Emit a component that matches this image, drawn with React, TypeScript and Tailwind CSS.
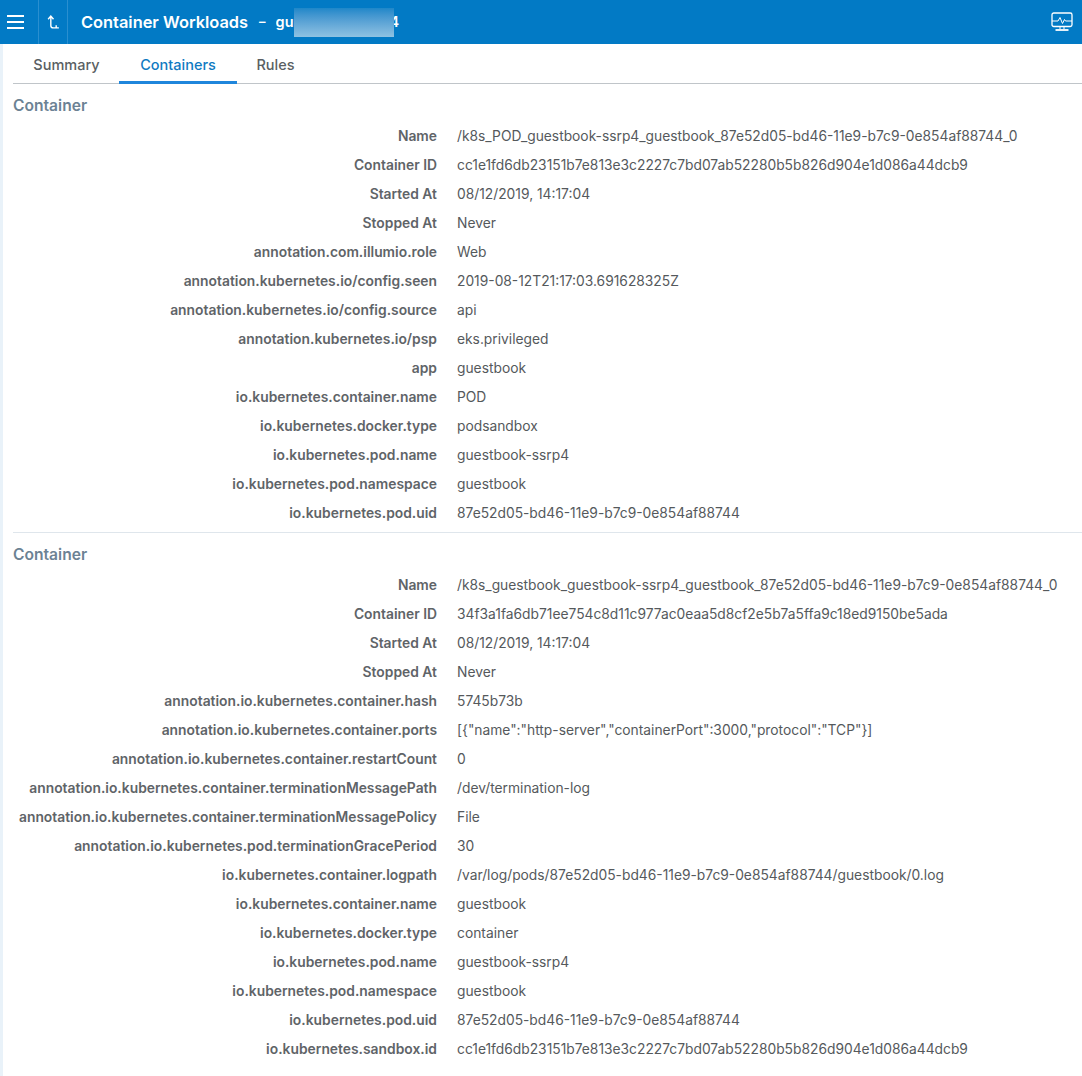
import * as React from "react";

type Row = [string, string];

const firstContainer: Row[] = [
  ["Name", "/k8s_POD_guestbook-ssrp4_guestbook_87e52d05-bd46-11e9-b7c9-0e854af88744_0"],
  ["Container ID", "cc1e1fd6db23151b7e813e3c2227c7bd07ab52280b5b826d904e1d086a44dcb9"],
  ["Started At", "08/12/2019, 14:17:04"],
  ["Stopped At", "Never"],
  ["annotation.com.illumio.role", "Web"],
  ["annotation.kubernetes.io/config.seen", "2019-08-12T21:17:03.691628325Z"],
  ["annotation.kubernetes.io/config.source", "api"],
  ["annotation.kubernetes.io/psp", "eks.privileged"],
  ["app", "guestbook"],
  ["io.kubernetes.container.name", "POD"],
  ["io.kubernetes.docker.type", "podsandbox"],
  ["io.kubernetes.pod.name", "guestbook-ssrp4"],
  ["io.kubernetes.pod.namespace", "guestbook"],
  ["io.kubernetes.pod.uid", "87e52d05-bd46-11e9-b7c9-0e854af88744"],
];

const secondContainer: Row[] = [
  ["Name", "/k8s_guestbook_guestbook-ssrp4_guestbook_87e52d05-bd46-11e9-b7c9-0e854af88744_0"],
  ["Container ID", "34f3a1fa6db71ee754c8d11c977ac0eaa5d8cf2e5b7a5ffa9c18ed9150be5ada"],
  ["Started At", "08/12/2019, 14:17:04"],
  ["Stopped At", "Never"],
  ["annotation.io.kubernetes.container.hash", "5745b73b"],
  ["annotation.io.kubernetes.container.ports", '[{"name":"http-server","containerPort":3000,"protocol":"TCP"}]'],
  ["annotation.io.kubernetes.container.restartCount", "0"],
  ["annotation.io.kubernetes.container.terminationMessagePath", "/dev/termination-log"],
  ["annotation.io.kubernetes.container.terminationMessagePolicy", "File"],
  ["annotation.io.kubernetes.pod.terminationGracePeriod", "30"],
  ["io.kubernetes.container.logpath", "/var/log/pods/87e52d05-bd46-11e9-b7c9-0e854af88744/guestbook/0.log"],
  ["io.kubernetes.container.name", "guestbook"],
  ["io.kubernetes.docker.type", "container"],
  ["io.kubernetes.pod.name", "guestbook-ssrp4"],
  ["io.kubernetes.pod.namespace", "guestbook"],
  ["io.kubernetes.pod.uid", "87e52d05-bd46-11e9-b7c9-0e854af88744"],
  ["io.kubernetes.sandbox.id", "cc1e1fd6db23151b7e813e3c2227c7bd07ab52280b5b826d904e1d086a44dcb9"],
];

const ContainerSection = ({ rows }: { rows: Row[] }) => (
  <section>
    <h2 className="h-[38px] pt-[11px] text-[15.6px] leading-[22px] font-semibold text-[#6c8294]">Container</h2>
    <div className="grid grid-cols-[424px_1fr] gap-x-[20px]">
      {rows.map(([label, value]) => (
        <React.Fragment key={label}>
          <div className="h-[29px] text-right text-[13.85px] leading-[29px] font-semibold whitespace-nowrap text-[#5f6468]">
            {label}
          </div>
          <div className="h-[29px] text-[13.8px] leading-[29px] whitespace-nowrap text-[#55595c]">{value}</div>
        </React.Fragment>
      ))}
    </div>
  </section>
);

const MonitorIcon = () => (
  <svg width="22" height="20" viewBox="0 0 22 20" fill="none" stroke="white" strokeWidth="1.3">
    <rect x="1" y="1" width="20" height="13.5" rx="1.8" />
    <path d="M1 9h6l2-3.5 2.5 6 2-4 1 1.5H21" strokeWidth="1" />
    <path d="M4.5 18h13" strokeWidth="1.8" />
    <path d="M9 15v2M13 15v2" strokeWidth="1" />
  </svg>
);

const App = () => (
  <div className="h-[1076px] w-[1082px] overflow-hidden bg-white font-['Inter',sans-serif]">
    <header className="flex h-[44px] items-center bg-[#027ac5] text-white">
      <div className="flex h-full w-[39px] items-center border-r border-[#2a8fd0] pl-[7px]">
        <div className="flex w-[17px] flex-col gap-[3.5px]">
          <span className="h-[2.5px] bg-white" />
          <span className="h-[2.5px] bg-white" />
          <span className="h-[2.5px] bg-white" />
        </div>
      </div>
      <div className="flex h-full w-[29px] items-center justify-center border-r border-[#2a8fd0]">
        <svg width="13" height="15" viewBox="0 0 12 14" fill="none" stroke="white" strokeWidth="1.3">
          <path d="M1 4l2.5-3L6 4M3.5 1.5v8.2c0 1.6.8 2.3 2.2 2.3H11M8.5 9.5v2.5" />
        </svg>
      </div>
      <h1 className="ml-[13px] text-[16.4px] font-semibold whitespace-nowrap">Container Workloads</h1>
      <span className="ml-[11px] text-[13px] font-semibold">–</span>
      <span className="ml-[10px] w-[18px] overflow-hidden text-[14.5px] font-semibold">gu</span>
      <div className="relative z-10 h-[29px] w-[100px] bg-gradient-to-b from-[#1d87c9] to-[#8fc2e2]" />
      <span className="-ml-[4px] text-[14.5px] font-semibold">4</span>
      <div className="mr-[9px] ml-auto flex items-center">
        <MonitorIcon />
      </div>
    </header>
    <div className="flex h-[1032px]">
      <div className="w-[3px] shrink-0 bg-[#e9f2f9]" />
      <main className="flex-1 pl-[10px]">
        <nav className="flex h-[40px] border-b border-[#c0c5c9] text-[14.5px] font-medium">
          <a className="flex h-[40px] w-[106px] items-center justify-center pt-[1px] pl-[1px] text-[#5a5f63]">Summary</a>
          <a className="flex h-[40px] w-[118px] items-center justify-center border-b-[3px] border-[#1f86dc] pt-[4px] text-[#0f7ac2]">
            Containers
          </a>
          <a className="flex h-[40px] w-[77px] items-center justify-center pt-[1px] text-[#5a5f63]">Rules</a>
        </nav>
        <ContainerSection rows={firstContainer} />
        <div className="mt-[4px] border-t border-[#dfe6ec]" />
        <ContainerSection rows={secondContainer} />
      </main>
    </div>
  </div>
);

export default App;
